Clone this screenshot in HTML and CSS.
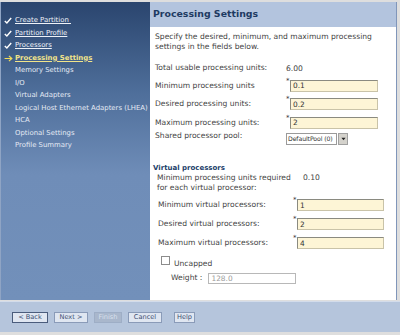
FILE: index.html
```html
<!DOCTYPE html>
<html lang="en">
<head>
    <meta charset="UTF-8">
    <title>Create Partition - Processing Settings</title>
    <link rel="stylesheet" href="styles.css">
</head>
<body>

<div class="window">
    <div class="main">

        <!-- Wizard steps -->
        <nav class="steps">
            <ul>
                <li class="done"><svg class="mark" viewBox="0 0 10 8"><path d="M1 4.5 L3.6 7 L9 1" /></svg><a href="#">Create Partition&nbsp;</a></li>
                <li class="done"><svg class="mark" viewBox="0 0 10 8"><path d="M1 4.5 L3.6 7 L9 1" /></svg><a href="#">Partition Profile</a></li>
                <li class="done"><svg class="mark" viewBox="0 0 10 8"><path d="M1 4.5 L3.6 7 L9 1" /></svg><a href="#">Processors</a></li>
                <li class="current"><svg class="mark arrow" viewBox="0 0 10 8"><path d="M0.5 4 H8.5 M5.5 1 L8.8 4 L5.5 7" /></svg><a href="#">Processing Settings</a></li>
                <li>Memory Settings</li>
                <li>I/O</li>
                <li>Virtual Adapters</li>
                <li>Logical Host Ethernet Adapters (LHEA)</li>
                <li>HCA</li>
                <li>Optional Settings</li>
                <li>Profile Summary</li>
            </ul>
        </nav>

        <!-- Settings panel -->
        <section class="panel">
            <h1 class="panel-title">Processing Settings</h1>
            <div class="panel-body">
                <p class="intro">Specify the desired, minimum, and maximum processing settings in the fields below.</p>

                <div class="form units">
                    <span class="label">Total usable processing units:</span>
                    <span class="value">6.00</span>

                    <span class="label">Minimum processing units</span>
                    <span class="field"><span class="req">*</span><input class="text" type="text" value="0.1"></span>

                    <span class="label">Desired processing units:</span>
                    <span class="field"><span class="req">*</span><input class="text" type="text" value="0.2"></span>

                    <span class="label">Maximum processing units:</span>
                    <span class="field"><span class="req">*</span><input class="text" type="text" value="2"></span>

                    <span class="label pool">Shared processor pool:</span>
                    <span class="field pool">
                        <span class="select"><span class="select-value">DefaultPool (0)</span><span class="select-btn"><svg viewBox="0 0 6 4"><path d="M0.5 0.5 H5.5 L3 3.5 Z" /></svg></span></span>
                    </span>
                </div>

                <h2 class="group-title">Virtual processors</h2>
                <div class="required-units">
                    <span class="label">Minimum processing units required<br>for each virtual processor:</span>
                    <span class="value">0.10</span>
                </div>

                <div class="form virtual">
                    <span class="label">Minimum virtual processors:</span>
                    <span class="field"><span class="req">*</span><input class="text" type="text" value="1"></span>

                    <span class="label">Desired virtual processors:</span>
                    <span class="field"><span class="req">*</span><input class="text" type="text" value="2"></span>

                    <span class="label">Maximum virtual processors:</span>
                    <span class="field"><span class="req">*</span><input class="text" type="text" value="4"></span>
                </div>

                <div class="uncapped">
                    <label class="check"><span class="box"></span>Uncapped</label>
                    <div class="weight">
                        <span class="label">Weight :</span>
                        <input class="text disabled" type="text" value="128.0" disabled>
                    </div>
                </div>
            </div>
        </section>
    </div>

    <!-- Wizard buttons -->
    <footer class="buttons">
        <button class="btn back">&lt; Back</button>
        <button class="btn next">Next &gt;</button>
        <button class="btn finish" disabled>Finish</button>
        <button class="btn cancel">Cancel</button>
        <button class="btn help">Help</button>
    </footer>
</div>

</body>
</html>
```

FILE: styles.css
```css
/* General */
body {
    margin: 0;
    font-family: 'DejaVu Sans', Verdana, sans-serif;
    background: #d9d9d9;
}

.window {
    width: 400px;
    height: 335px;
    box-sizing: border-box;
    padding: 2px 3px 3px 0;
    display: flex;
    flex-direction: column;
    background: #dedede;
    overflow: hidden;
}

.main {
    display: flex;
    height: 298px;
}

/* Steps sidebar */
.steps {
    width: 147px;
    flex: none;
    border-left: 1px solid #8fa4c4;
    padding: 12px 0 0 2px;
    background: linear-gradient(180deg, #2a456e 0%, #4e6e9a 30%, #6f8db8 58%, #7290ba 100%);
}
.steps ul {
    list-style: none;
    margin: 0;
    padding: 0;
}
.steps li {
    height: 12.5px;
    line-height: 12.5px;
    font-size: 6.9px;
    color: #e4eaf4;
    padding-left: 12px;
    position: relative;
    white-space: nowrap;
}
.steps li a {
    color: #eef2f8;
    text-decoration: underline;
}
.steps li.current a {
    color: #f2e48a;
    font-weight: bold;
}
.mark {
    position: absolute;
    left: 1px;
    top: 3px;
    width: 8px;
    height: 7px;
    fill: none;
    stroke: #ffffff;
    stroke-width: 1.8;
}
.mark.arrow {
    stroke: #f2dc5a;
    stroke-width: 1.4;
    width: 9px;
}

/* Panel */
.panel {
    flex: 1;
    background: #ffffff;
    border-right: 1px solid #8096ba;
    display: flex;
    flex-direction: column;
}
.panel-title {
    margin: 0;
    height: 25px;
    line-height: 24px;
    padding-left: 3px;
    background: #b3c4de;
    color: #1e3a62;
    font-size: 9.4px;
    font-weight: bold;
}
.panel-body {
    padding: 5px 0 0 5px;
    font-size: 7.6px;
    color: #444444;
}
.intro {
    margin: 0 0 11px 0;
    width: 236px;
    line-height: 10px;
}

/* Field grids */
.form {
    display: grid;
    align-items: center;
}
.form.units {
    grid-template-columns: 131px 1fr;
    grid-template-rows: 10px 12px 12px 12px 12px;
    row-gap: 6.5px;
}
.form.units .pool {
    align-self: start;
    margin-top: -2.5px;
}
.form.units .label.pool {
    margin-top: -4.5px;
}
.form.virtual {
    margin-left: 3px;
    grid-template-columns: 135px 1fr;
    row-gap: 7px;
}
.label {
    line-height: 10px;
    white-space: nowrap;
}
.field {
    display: flex;
    align-items: flex-start;
}
.req {
    width: 4px;
    font-size: 7px;
    line-height: 6px;
    color: #333333;
    margin-top: -2px;
}
.text {
    width: 88px;
    height: 12px;
    box-sizing: border-box;
    margin: 0;
    padding: 0 2px;
    font-family: inherit;
    font-size: 7.4px;
    color: #333333;
    background: #fdf5d6;
    border: 1px solid #c9c3a8;
    border-top-color: #8a8a80;
    border-left-color: #8a8a80;
}
.form.virtual .text {
    width: 87px;
}
.text.disabled {
    background: #ffffff;
    color: #9a9a9a;
    border: 1px solid #b8b8b8;
}

/* Select box */
.select {
    display: flex;
    height: 12px;
}
.select-value {
    width: 51px;
    box-sizing: border-box;
    border: 1px solid #9a9a9a;
    background: #ffffff;
    color: #333333;
    font-size: 6.2px;
    letter-spacing: -0.1px;
    line-height: 10px;
    padding-left: 1px;
    white-space: nowrap;
}
.select-btn {
    width: 10px;
    margin-left: 1px;
    box-sizing: border-box;
    background: #d4d2cc;
    border: 1px solid #a0a0a0;
    display: flex;
    align-items: center;
    justify-content: center;
}
.select-btn svg {
    width: 5px;
    height: 4px;
    fill: #222222;
}

/* Virtual processors */
.group-title {
    margin: 17px 0 0 -2px;
    font-size: 7px;
    line-height: 9px;
    color: #22406a;
    font-weight: bold;
}
.required-units {
    display: flex;
    margin: 0 0 6px 2px;
}
.required-units .label {
    width: 146px;
}

.uncapped {
    margin: 6px 0 0 6px;
}
.check {
    display: flex;
    align-items: flex-start;
    height: 12px;
    line-height: 17px;
}
.box {
    width: 7px;
    height: 7px;
    border: 1px solid #8c8c8c;
    background: #ffffff;
    margin-right: 4px;
    margin-top: 1px;
}
.weight {
    display: flex;
    align-items: center;
    gap: 6px;
    margin: 5.5px 0 0 10px;
}
.weight .text {
    width: 88px;
    height: 11px;
}

/* Buttons */
.buttons {
    flex: 1;
    margin-right: -3px;
    margin-top: 1px;
    background: #b5c5dc;
    border-top: 1px solid #d3dcea;
    display: flex;
    align-items: center;
    gap: 6px;
    padding: 0 0 0 12px;
}
.btn {
    height: 11px;
    padding: 0;
    font-family: inherit;
    font-size: 6.6px;
    color: #3d4f72;
    background: #dfe6f1;
    border: 1px solid #8a9bb8;
    border-radius: 0;
    line-height: 9px;
}
.btn.back { width: 36px; border-color: #4a5c7c; }
.btn.next { width: 34px; }
.btn.finish { width: 28px; }
.btn.cancel { width: 34px; }
.btn.help { width: 21px; margin-left: 6px; }
.btn:disabled {
    background: #a9b7cc;
    color: #d8e0ec;
    border-color: #9eaec6;
}
```
